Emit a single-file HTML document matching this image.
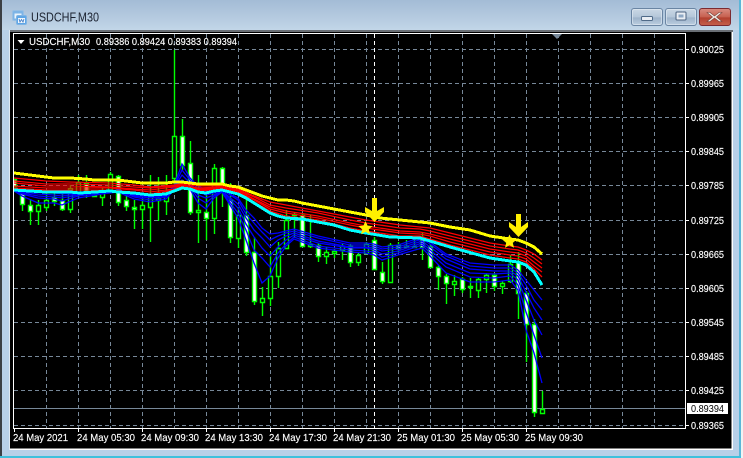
<!DOCTYPE html>
<html><head><meta charset="utf-8"><title>USDCHF,M30</title>
<style>
html,body{margin:0;padding:0;background:#fff;width:743px;height:458px;overflow:hidden}
svg{display:block}
text{font-family:"Liberation Sans",Arial,sans-serif;font-size:10.5px;fill:#fff;stroke:#fff;stroke-width:.15px}
</style></head><body>
<svg width="743" height="458" viewBox="0 0 743 458" xmlns="http://www.w3.org/2000/svg">
<defs>
<linearGradient id="tb" x1="0" y1="0" x2="0" y2="1"><stop offset="0" stop-color="#a3bcd6"/><stop offset=".5" stop-color="#b2c8de"/><stop offset="1" stop-color="#c2d6e8"/></linearGradient>
<linearGradient id="bt" x1="0" y1="0" x2="0" y2="1"><stop offset="0" stop-color="#cbd9e6"/><stop offset=".5" stop-color="#b4c6d9"/><stop offset=".55" stop-color="#9db3ca"/><stop offset="1" stop-color="#bccfe1"/></linearGradient>
<linearGradient id="cl" x1="0" y1="0" x2="0" y2="1"><stop offset="0" stop-color="#d98d82"/><stop offset=".5" stop-color="#c6604f"/><stop offset=".55" stop-color="#b3402f"/><stop offset="1" stop-color="#c4604c"/></linearGradient>
<clipPath id="pl"><rect x="14" y="34" width="671" height="394"/></clipPath>
</defs>
<rect width="743" height="458" fill="#b8d0e8"/>
<rect x="0" y="0" width="743" height="30" fill="url(#tb)"/>
<rect x="0" y="0" width="2" height="458" fill="#3b3f44"/>
<rect x="741" y="0" width="2" height="458" fill="#f2f2f2"/>
<rect x="739" y="0" width="2" height="458" fill="#5cb6d8"/>
<rect x="0" y="456" width="741" height="2" fill="#3fc0dc"/>
<rect x="9" y="30" width="724" height="2" fill="#6a6f75"/>
<rect x="9" y="30" width="1" height="420" fill="#dfe8f1"/>
<rect x="10" y="32" width="723" height="418" fill="#fff"/>
<rect x="10" y="32" width="721.5" height="416.5" fill="#000"/>

<!-- title -->
<rect x="12.5" y="10.5" width="11" height="10" rx="1.5" fill="#7db4e6" stroke="#97bfe4"/>
<rect x="14.5" y="13.5" width="7" height="5" fill="#eaf4fc"/>
<rect x="16.5" y="15.5" width="10" height="9" rx="1.5" fill="#5ea6e6" stroke="#7fb4e4"/>
<rect x="18" y="18" width="7" height="5" fill="#f2f8fd"/>
<path d="M19 19l1 3 1.500-2.500 1.500 2.500 1-3" fill="none" stroke="#3a78c4" stroke-width=".8"/>
<text x="31" y="21.5" textLength="68" lengthAdjust="spacingAndGlyphs" style="font-size:12.5px;fill:#1b2230;stroke:none">USDCHF,M30</text>

<!-- buttons -->
<rect x="631.5" y="8.5" width="31" height="17" rx="2.5" fill="url(#bt)" stroke="#6a85a3"/>
<rect x="632.5" y="9.5" width="29" height="15" rx="2" fill="none" stroke="#e2ebf3" stroke-opacity=".6"/>
<rect x="641.5" y="16.5" width="11" height="4" rx="1" fill="#e9eef4" stroke="#4f6a88"/>
<rect x="665.5" y="8.5" width="31" height="17" rx="2.5" fill="url(#bt)" stroke="#6a85a3"/>
<rect x="666.5" y="9.5" width="29" height="15" rx="2" fill="none" stroke="#e2ebf3" stroke-opacity=".6"/>
<rect x="676" y="12" width="10" height="8" rx="1" fill="#e9eef4" stroke="#4a6280"/>
<rect x="678.5" y="14.5" width="5" height="3" fill="#8ea8c4"/>
<rect x="699.5" y="8.5" width="31" height="17" rx="2.5" fill="url(#cl)" stroke="#7c2a30"/>
<path d="M710 12.500l4.500 3.500 4.500-3.500h3l-5.500 4.500 5.500 4.500h-3l-4.500-3.500-4.500 3.500h-3l5.500-4.500-5.500-4.500z" fill="#f1ebe6" stroke="#77453f" stroke-width=".6"/>

<!-- grid -->
<g stroke="#778899" stroke-width="1" stroke-dasharray="4 3" fill="none" shape-rendering="crispEdges">
<path d="M14 49.500H685M14 83.500H685M14 117.500H685M14 151.500H685M14 185.500H685M14 220.500H685M14 254.500H685M14 288.500H685M14 322.500H685M14 356.500H685M14 390.500H685M14 425.500H685"/>
<path d="M46.500 34V428M78.500 34V428M110.500 34V428M142.500 34V428M174.500 34V428M206.500 34V428M238.500 34V428M270.500 34V428M302.500 34V428M334.500 34V428M366.500 34V428M398.500 34V428M430.500 34V428M462.500 34V428M494.500 34V428M526.500 34V428M558.500 34V428M590.500 34V428M622.500 34V428M654.500 34V428"/>
</g>
<path d="M374.500 34V428" stroke="#fff" stroke-width="1" stroke-dasharray="4 3" fill="none" shape-rendering="crispEdges"/>
<path d="M14 408.500H685" stroke="#778899" stroke-width="1" shape-rendering="crispEdges"/>

<!-- candles -->
<g clip-path="url(#pl)">
<path fill="none" stroke="#00ff00" stroke-width="1.4" d="M22.500 190V211M30.500 199V225M38.500 200V225M46.500 193V211M54.500 192V206M62.500 192V211M70.500 185V213M78.500 175V197M86.500 175V198M94.500 193V197M102.500 188V206M110.500 172V192M118.500 175V206M126.500 195V211M134.500 200V229M142.500 199V229M150.500 175V242M158.500 177V221M166.500 175V215M174.500 50V185M182.500 119V170M190.500 141V215M198.500 175V243M206.500 195V240M214.500 164V234M222.500 167V207M230.500 183V243M238.500 207V248M246.500 193V256M254.500 237V305M262.500 287V316M270.500 252V306M278.500 242V288M286.500 210V249M294.500 212V238M302.500 213V247M310.500 215V248M318.500 243V262M326.500 247V264M334.500 249V258M342.500 244V260M350.500 244V267M358.500 253V266M366.500 242V254M374.500 237V270M382.500 262V284M390.500 243V283M398.500 242V252M406.500 240V248M414.500 237V248M422.500 232V260M430.500 244V268M438.500 265V290M446.500 274V304M454.500 275V296M462.500 277V293M470.500 278V298M478.500 277V298M486.500 273V293M494.500 273V291M502.500 281V294M510.500 255V283M518.500 252V319M526.500 291V362M534.500 319V417M542.500 391V414"/>
<path fill="#000" stroke="#00ff00" stroke-width="1.4" d="M36.500 205.500h4v6h-4zM44.500 200.500h4v7h-4zM68.500 188.500h4v21h-4zM76.500 182.500h4v10h-4zM100.500 192.500h4v5h-4zM108.500 174.500h4v16h-4zM140.500 205.500h4v4h-4zM148.500 197.500h4v10h-4zM156.500 198.500h4v2h-4zM164.500 193.500h4v8h-4zM172.500 136.500h4v42h-4zM196.500 210.500h4v2h-4zM212.500 168.500h4v50h-4zM236.500 215.500h4v23h-4zM260.500 298.500h4v4h-4zM268.500 276.500h4v22h-4zM276.500 248.500h4v28h-4zM284.500 220.500h4v28h-4zM292.500 214.500h4v1h-4zM308.500 244.500h4v2h-4zM324.500 252.500h4v4h-4zM332.500 251.500h4v2h-4zM340.500 246.500h4v4h-4zM356.500 255.500h4v7h-4zM364.500 244.500h4v9h-4zM388.500 245.500h4v37h-4zM404.500 246.500h4v1h-4zM412.500 246.500h4v1h-4zM452.500 281.500h4v3h-4zM468.500 286.500h4v1h-4zM476.500 279.500h4v11h-4zM484.500 275.500h4v4h-4zM500.500 283.500h4v3h-4zM508.500 264.500h4v17h-4zM540.500 409.500h4v4h-4z"/>
<path fill="#fff" stroke="#00ff00" stroke-width="1.4" d="M12.500 179.500h4v7h-4zM20.500 193.500h4v11h-4zM28.500 205.500h4v6h-4zM52.500 197.500h4v4h-4zM60.500 200.500h4v9h-4zM84.500 183.500h4v8h-4zM92.500 195.500h4v1h-4zM116.500 176.500h4v26h-4zM124.500 200.500h4v6h-4zM132.500 207.500h4v2h-4zM180.500 136.500h4v29h-4zM188.500 163.500h4v49h-4zM204.500 212.500h4v6h-4zM220.500 168.500h4v20h-4zM228.500 200.500h4v37h-4zM244.500 215.500h4v37h-4zM252.500 252.500h4v49h-4zM300.500 215.500h4v31h-4zM316.500 245.500h4v11h-4zM348.500 246.500h4v16h-4zM372.500 240.500h4v29h-4zM380.500 272.500h4v9h-4zM396.500 245.500h4v3h-4zM420.500 239.500h4v8h-4zM428.500 246.500h4v21h-4zM436.500 267.500h4v9h-4zM444.500 276.500h4v7h-4zM460.500 279.500h4v10h-4zM492.500 275.500h4v11h-4zM516.500 262.500h4v31h-4zM524.500 293.500h4v31h-4zM532.500 324.500h4v88h-4z"/>

<!-- blue fan -->
<g fill="none" stroke="#0000ff" stroke-width="1.3">
<polyline points="14,188 22,190 38,191 54,192 62,192 78,192 102,191 118,190 134,193 150,195 166,194 174,186 182,164 190,178 198,186 206,190 214,192 222,190 238,198 246,210 254,218 262,228 270,234 278,233 286,231 294,229 318,236 350,243 366,243 374,244 382,247 398,245 422,237 430,242 446,254 470,263 494,265 510,265 518,270 526,280 534,290 542,300"/>
<polyline points="14,189 22,191 38,192 54,193 62,194 78,193 102,192 118,190 134,194 150,196 166,195 174,187 182,170 190,180 198,189 206,192 214,192 222,190 238,200 246,214 254,223 262,232 270,240 278,236 286,233 294,231 318,238 350,245 366,245 374,246 382,249 398,247 422,239 430,244 446,256 470,266 494,268 510,268 518,273 526,285 534,300 542,310"/>
<polyline points="14,189 22,192 38,194 54,195 62,196 78,194 102,192 118,190 134,195 150,197 166,195 174,188 182,175 190,183 198,192 206,195 214,193 222,191 238,204 246,218 254,230 262,238 270,247 278,240 286,236 294,233 318,241 350,247 366,247 374,248 382,251 398,249 422,241 430,247 446,259 470,269 494,271 510,271 518,276 526,292 534,308 542,320"/>
<polyline points="14,190 22,193 38,196 54,197 62,198 78,195 102,193 118,191 134,196 150,198 166,196 174,188 182,180 190,185 198,195 206,198 214,195 222,191 238,208 246,224 254,237 262,248 270,256 278,247 286,240 294,235 318,243 350,248 366,248 374,250 382,254 398,251 422,243 430,250 446,263 470,273 494,274 510,273 518,280 526,300 534,320 542,335"/>
<polyline points="14,190 22,194 38,198 54,199 62,201 78,196 102,193 118,191 134,197 150,200 166,197 174,189 182,184 190,187 198,198 206,203 214,196 222,192 238,213 246,230 254,250 262,258 270,267 278,253 286,244 294,237 318,246 350,250 366,251 374,252 382,257 398,253 422,245 430,253 446,267 470,277 494,278 510,276 518,285 526,312 534,335 542,358"/>
<polyline points="14,191 22,196 38,203 54,203 62,205 78,198 102,194 118,192 134,199 150,202 166,199 174,190 182,187 190,189 198,203 206,209 214,198 222,192 238,218 246,240 254,263 262,283 270,276 278,258 286,246 294,239 318,248 350,252 366,253 374,255 382,260 398,255 422,248 430,256 446,273 470,282 494,282 510,280 518,290 526,330 534,353 542,383"/>
</g>
<!-- red band -->
<g fill="none" stroke="#ff0000" stroke-width="1.3">
<polyline points="14,178 46,181 70,182 110,183 134,185 150,187 174,185 182,184 198,186 222,186 238,189 254,196 270,202 286,205 318,211 350,217 366,220 400,225 420,227 430,228 450,233 490,243 510,246 518,247 526,250 534,254 542,260"/>
<polyline points="14,181 46,184 70,184 110,185 134,187 150,188 174,186 182,185 198,188 222,187 238,190 254,197 270,205 286,208 318,213 350,220 366,223 400,228 420,229 430,231 450,236 490,246 510,249 518,250 526,253 534,258 542,264"/>
<polyline points="14,183 46,186 70,186 110,187 134,189 150,190 174,187 182,186 198,189 222,188 238,191 254,199 270,207 286,211 318,216 350,223 366,226 400,231 420,232 430,234 450,239 490,249 510,252 518,253 526,256 534,262 542,268"/>
<polyline points="14,186 46,188 70,188 110,188 134,190 150,192 174,189 182,186 198,190 222,188 238,192 254,200 270,209 286,213 318,218 350,225 366,228 400,233 420,234 430,236 450,242 490,252 510,255 518,256 526,259 534,266 542,272"/>
<polyline points="14,188 46,190 70,190 110,190 134,192 150,194 174,190 182,187 198,191 222,189 238,193 254,202 270,211 286,216 318,220 350,228 366,231 400,236 420,236 430,239 450,245 490,255 510,258 518,259 526,262 534,269 542,277"/>
</g>
<!-- yellow / cyan -->
<polyline fill="none" stroke="#ffff00" stroke-width="3" shape-rendering="crispEdges" points="14,173 22,174 30,175 38,176 46,177 54,178 70,178 86,179 94,180 118,180 126,181 134,182 142,183 166,183 174,182 182,182 190,183 198,184 222,184 230,186 238,187 246,190 254,193 262,196 270,198 278,200 286,200 294,201 302,203 318,206 334,209 350,212 366,215 380,218 400,220 420,222 430,223 450,227 470,230 490,236 510,239 518,240 526,243 534,247 542,254"/>
<polyline fill="none" stroke="#00ffff" stroke-width="3" shape-rendering="crispEdges" points="14,190 30,191 46,192 70,192 80,193 110,191 118,192 134,193 150,195 166,194 174,191 182,188 190,189 198,192 206,193 214,191 222,190 230,192 238,194 246,198 254,203 262,208 270,213 278,216 286,218 302,219 318,222 334,225 350,230 366,233 390,237 420,238 430,241 450,247 490,258 510,261 518,262 526,265 534,272 542,285"/>
</g>

<!-- arrows and stars -->
<path d="M372 198h5v13l7-4v5l-9.500 10-9.500-10v-5l7 4z" fill="#fff000"/>
<path d="M365.500 221l2.100 4.600 5 .5-3.800 3.300 1.200 4.900-4.500-2.600-4.500 2.600 1.200-4.900-3.800-3.300 5-.5z" fill="#fff000"/>
<path d="M516 214h5v13l7-5v5l-9.500 10-9.500-10v-5l7 5z" fill="#fff000"/>
<path d="M509.500 234.500l2.100 4.600 5 .5-3.800 3.300 1.200 4.900-4.500-2.600-4.500 2.600 1.200-4.900-3.800-3.300 5-.5z" fill="#fff000"/>

<!-- axes -->
<g shape-rendering="crispEdges">
<path d="M13.500 33V429M13 33.500H686M685.500 33V429M13 428.500H686" stroke="#fff" stroke-width="1" fill="none"/>
<path stroke="#fff" stroke-width="1" d="M685 49.500h4M685 83.500h4M685 117.500h4M685 151.500h4M685 185.500h4M685 220.500h4M685 254.500h4M685 288.500h4M685 322.500h4M685 356.500h4M685 390.500h4M685 425.500h4M14.500 428v4M78.500 428v4M142.500 428v4M206.500 428v4M270.500 428v4M334.500 428v4M398.500 428v4M462.500 428v4M526.500 428v4"/>
</g>
<path d="M552 34h10l-5 5z" fill="#778899"/>
<path d="M17.500 40h7l-3.500 4z" fill="#fff"/>
<text x="29" y="45" textLength="61" lengthAdjust="spacingAndGlyphs">USDCHF,M30</text>
<text x="96" y="45" textLength="141" lengthAdjust="spacingAndGlyphs">0.89386 0.89424 0.89383 0.89394</text>

<g>
<text x="691" y="53" textLength="33" lengthAdjust="spacingAndGlyphs">0.90025</text>
<text x="691" y="87" textLength="33" lengthAdjust="spacingAndGlyphs">0.89965</text>
<text x="691" y="121" textLength="33" lengthAdjust="spacingAndGlyphs">0.89905</text>
<text x="691" y="155" textLength="33" lengthAdjust="spacingAndGlyphs">0.89845</text>
<text x="691" y="189" textLength="33" lengthAdjust="spacingAndGlyphs">0.89785</text>
<text x="691" y="224" textLength="33" lengthAdjust="spacingAndGlyphs">0.89725</text>
<text x="691" y="258" textLength="33" lengthAdjust="spacingAndGlyphs">0.89665</text>
<text x="691" y="292" textLength="33" lengthAdjust="spacingAndGlyphs">0.89605</text>
<text x="691" y="326" textLength="33" lengthAdjust="spacingAndGlyphs">0.89545</text>
<text x="691" y="360" textLength="33" lengthAdjust="spacingAndGlyphs">0.89485</text>
<text x="691" y="394" textLength="33" lengthAdjust="spacingAndGlyphs">0.89425</text>
<text x="691" y="429" textLength="33" lengthAdjust="spacingAndGlyphs">0.89365</text>
</g>
<rect x="687" y="403" width="41" height="11" fill="#fff"/>
<text x="691" y="412" textLength="33" lengthAdjust="spacingAndGlyphs" style="fill:#000;stroke:none">0.89394</text>

<g>
<text x="13" y="441" textLength="55" lengthAdjust="spacingAndGlyphs">24 May 2021</text>
<text x="77" y="441" textLength="58" lengthAdjust="spacingAndGlyphs">24 May 05:30</text>
<text x="141" y="441" textLength="58" lengthAdjust="spacingAndGlyphs">24 May 09:30</text>
<text x="205" y="441" textLength="58" lengthAdjust="spacingAndGlyphs">24 May 13:30</text>
<text x="269" y="441" textLength="58" lengthAdjust="spacingAndGlyphs">24 May 17:30</text>
<text x="333" y="441" textLength="58" lengthAdjust="spacingAndGlyphs">24 May 21:30</text>
<text x="397" y="441" textLength="58" lengthAdjust="spacingAndGlyphs">25 May 01:30</text>
<text x="461" y="441" textLength="58" lengthAdjust="spacingAndGlyphs">25 May 05:30</text>
<text x="525" y="441" textLength="58" lengthAdjust="spacingAndGlyphs">25 May 09:30</text>
</g>
</svg>
</body></html>
